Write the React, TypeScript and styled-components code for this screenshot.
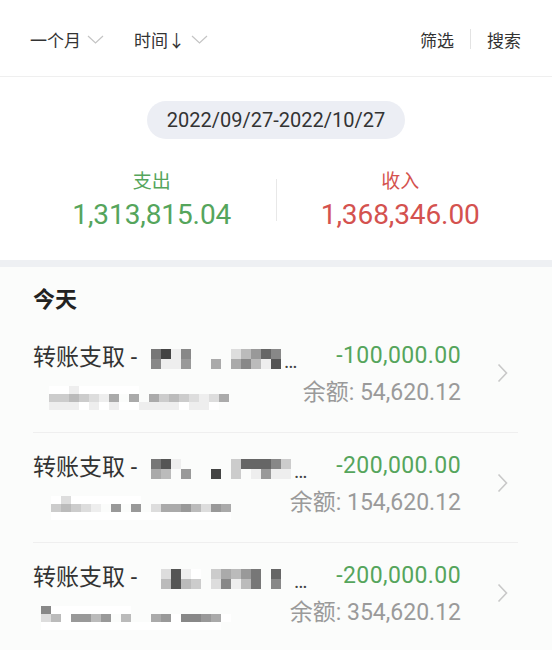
import React from 'react';
import styled, { createGlobalStyle, css } from 'styled-components';

const GlobalStyle = createGlobalStyle`
  html, body {
    margin: 0;
    padding: 0;
    background: #fbfcfb;
  }
  body {
    font-family: Roboto, 'Noto Sans CJK SC', sans-serif;
    -webkit-font-smoothing: antialiased;
  }
`;

type Tone = 'out' | 'in';

const toneColor = (tone: Tone) => (tone === 'out' ? '#55a55c' : '#d4524f');

const Page = styled.div`
  width: 552px;
  min-height: 650px;
  background: #fbfcfb;
  overflow: hidden;
`;

const Header = styled.header`
  background: #ffffff;
  border-bottom: 7px solid #eef0f3;
  padding-bottom: 29px;
`;

const Toolbar = styled.div`
  height: 77px;
  display: flex;
  align-items: center;
  justify-content: space-between;
  padding: 2px 31px 0 30px;
  border-bottom: 1px solid #efefef;
  box-sizing: border-box;
  font-size: 17px;
  color: #333;
`;

const ToolGroup = styled.div<{ $gap: number }>`
  display: flex;
  align-items: center;
  gap: ${(p) => p.$gap}px;
`;

const Dropdown = styled.div`
  display: flex;
  align-items: center;
  gap: 6px;
`;

const ToolDivider = styled.span`
  width: 1px;
  height: 20px;
  background: #e3e3e3;
`;

const RangeRow = styled.div`
  display: flex;
  justify-content: center;
  margin-top: 24px;
`;

const RangePill = styled.div`
  height: 38px;
  line-height: 38px;
  padding: 0 20px;
  border-radius: 19px;
  background: #eceef4;
  font-size: 20px;
  color: #333;
`;

const Summary = styled.div`
  display: grid;
  grid-template-columns: 1fr 1px 1fr;
  align-items: center;
  padding: 0 28px 0 28px;
  margin-top: 30px;
`;

const Stat = styled.div`
  display: flex;
  flex-direction: column;
  align-items: center;
  gap: 4px;
`;

const StatLabel = styled.span<{ $tone: Tone }>`
  font-size: 19px;
  line-height: 26px;
  color: ${(p) => toneColor(p.$tone)};
`;

const StatValue = styled.span<{ $tone: Tone }>`
  font-size: 28px;
  line-height: 32px;
  letter-spacing: -0.1px;
  color: ${(p) => toneColor(p.$tone)};
`;

const StatDivider = styled.span`
  height: 42px;
  background: #e8e8e8;
`;

const DayTitle = styled.h2`
  margin: 0 0 11px;
  padding: 21px 33px 0;
  font-size: 22px;
  line-height: 24px;
  font-weight: 700;
  color: #222;
`;

const Record = styled.div`
  display: flex;
  align-items: center;
  margin: 0 34px 0 33px;
  padding: 18px 0 28px;
  border-bottom: 1px solid #efefef;
`;

const RecordBody = styled.div`
  flex: 1;
  display: flex;
  flex-direction: column;
  gap: 7px;
`;

const Line = styled.div`
  height: 28px;
  display: flex;
  align-items: center;
  justify-content: space-between;
`;

const Party = styled.div`
  display: flex;
  align-items: center;
  font-size: 23px;
  color: #333;
  white-space: pre;
`;

const Ellipsis = styled.span`
  font-size: 20px;
  color: #444;
  margin-left: 3px;
  align-self: flex-end;
  line-height: 22px;
`;

const Amount = styled.span<{ $tone: Tone }>`
  font-size: 23px;
  letter-spacing: 0.4px;
  color: ${(p) => toneColor(p.$tone)};
`;

const Balance = styled.span`
  font-size: 23px;
  color: #9a9a9a;
`;

const Mosaic = styled.div<{ $shift: number; $left: number }>`
  display: flex;
  flex-direction: column;
  margin-left: ${(p) => p.$left}px;
  transform: translateY(${(p) => p.$shift}px);
`;

const MosaicRow = styled.div`
  display: flex;
`;

const Cell = styled.span<{ $shade: string; $h: number }>`
  width: 10px;
  height: ${(p) => p.$h}px;
  ${(p) =>
    p.$shade === '.'
      ? css`background: transparent;`
      : css`background: #${p.$shade}${p.$shade}${p.$shade};`}
`;

const CaretIcon = () => (
  <svg width="17" height="9" viewBox="0 0 17 9" fill="none">
    <path d="M1 1 L8.5 8 L16 1" stroke="#c4c4c4" strokeWidth="1.2" />
  </svg>
);

const Chevron = styled.svg`
  margin: 0 10px 0 36px;
  flex-shrink: 0;
`;

const ChevronIcon = () => (
  <Chevron width="11" height="20" viewBox="0 0 11 20" fill="none">
    <path d="M1.5 1.5 L9.5 10 L1.5 18.5" stroke="#c8c8c8" strokeWidth="1.6" />
  </Chevron>
);

function Blur({ rows, left = 0, shift = 0, h = 10 }: { rows: string[]; left?: number; shift?: number; h?: number }) {
  return (
    <Mosaic $left={left} $shift={shift}>
      {rows.map((row, i) => (
        <MosaicRow key={i}>
          {row.split('').map((c, j) => (
            <Cell key={j} $shade={c} $h={h} />
          ))}
        </MosaicRow>
      ))}
    </Mosaic>
  );
}

interface TransferRecord {
  amount: string;
  balance: string;
  name: string[];
  memo: string[];
  memoLeft: number;
}

const records: TransferRecord[] = [
  {
    amount: '-100,000.00',
    balance: '余额: 54,620.12',
    name: ['74e8....db968', '8ee9..a.a8be5'],
    memo: ['ffeffffff', 'ccbcdea.a.acbcdeda', 'eeefefeffeeeefeef'],
    memoLeft: 16,
  },
  {
    amount: '-200,000.00',
    balance: '余额: 154,620.12',
    name: ['75e.....c6668c', 'ab.9..4.c.e9ee'],
    memo: ['fdfffffff', 'cbcde.9.9.daa9bd9a', 'ffffffffffffffffff'],
    memoLeft: 18,
  },
  {
    amount: '-200,000.00',
    balance: '余额: 354,620.12',
    name: ['.d5ef.cab97.6.', '.b5bc.d8eb7.8.'],
    memo: ['8ffffffff', 'dbf99b9.b..a9f889af', 'ffffffffffffffffff'],
    memoLeft: 8,
  },
];

export default function App() {
  return (
    <Page>
      <GlobalStyle />
      <Header>
        <Toolbar>
          <ToolGroup $gap={30}>
            <Dropdown>
              一个月
              <CaretIcon />
            </Dropdown>
            <Dropdown>
              时间↓
              <CaretIcon />
            </Dropdown>
          </ToolGroup>
          <ToolGroup $gap={16}>
            <span>筛选</span>
            <ToolDivider />
            <span>搜索</span>
          </ToolGroup>
        </Toolbar>

        <RangeRow>
          <RangePill>2022/09/27-2022/10/27</RangePill>
        </RangeRow>

        <Summary>
          <Stat>
            <StatLabel $tone='out'>支出</StatLabel>
            <StatValue $tone='out'>1,313,815.04</StatValue>
          </Stat>
          <StatDivider />
          <Stat>
            <StatLabel $tone='in'>收入</StatLabel>
            <StatValue $tone='in'>1,368,346.00</StatValue>
          </Stat>
        </Summary>
      </Header>

      <DayTitle>今天</DayTitle>
      {records.map((record, i) => (
        <Record key={i}>
          <RecordBody>
            <Line>
              <Party>
                转账支取 -
                <Blur rows={record.name} left={14} shift={4} />
                <Ellipsis>…</Ellipsis>
              </Party>
              <Amount $tone='out'>{record.amount}</Amount>
            </Line>
            <Line>
              <Blur rows={record.memo} left={record.memoLeft} shift={8} h={8} />
              <Balance>{record.balance}</Balance>
            </Line>
          </RecordBody>
          <ChevronIcon />
        </Record>
      ))}
    </Page>
  );
}
